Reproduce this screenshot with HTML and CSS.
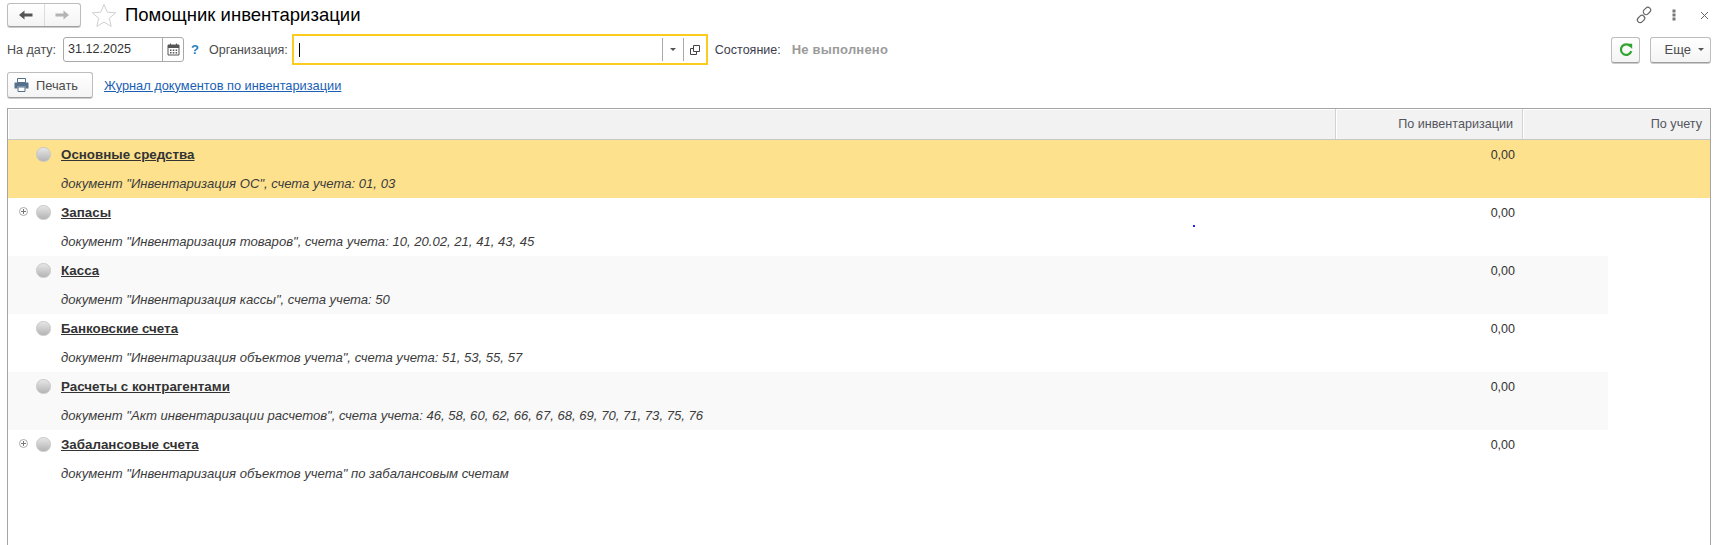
FILE: index.html
```html
<!DOCTYPE html>
<html lang="ru">
<head>
<meta charset="utf-8">
<title>Помощник инвентаризации</title>
<link rel="stylesheet" href="styles.css">
</head>
<body>
<div class="page">
  <header class="titlebar">
    <div class="nav-group">
      <button class="nav-btn"><svg width="16" height="12" viewBox="0 0 16 12"><path d="M1 6l5.500-4.500v3h8v3h-8v3z" fill="#555"/></svg></button>
      <button class="nav-btn"><svg width="16" height="12" viewBox="0 0 16 12"><path d="M15 6L9.500 1.500v3h-8v3h8v3z" fill="#b4b4b4"/></svg></button>
    </div>
    <svg class="star" width="26" height="25" viewBox="0 0 26 25"><path d="M13 1.500l3.300 7.600 8.200.8-6.200 5.400 1.900 8.100L13 19.100l-7.200 4.300 1.900-8.100L1.500 9.900l8.200-.8z" fill="none" stroke="#cfcfcf" stroke-width="1"/></svg>
    <h1 class="title">Помощник инвентаризации</h1>
    <div class="win-icons">
      <svg width="18" height="18" viewBox="0 0 18 18"><g fill="none" stroke="#666" stroke-width="1.200"><rect x="8" y="2.200" width="8" height="5.500" rx="2.700" transform="rotate(-45 12 5)"/><rect x="2" y="10.300" width="8" height="5.500" rx="2.700" transform="rotate(-45 6 13)"/></g></svg>
      <svg class="dots" width="4" height="12" viewBox="0 0 4 12"><g fill="#777"><rect x="0.500" y="0.500" width="3" height="3"/><rect x="0.500" y="4.500" width="3" height="3"/><rect x="0.500" y="8.500" width="3" height="3"/></g></svg>
      <svg width="9" height="9" viewBox="0 0 9 9"><path d="M1 1l7 7M8 1l-7 7" stroke="#666" stroke-width="1" fill="none"/></svg>
    </div>
  </header>

  <div class="filters">
    <span class="label">На дату:</span>
    <div class="date-field">
      <span class="date-value">31.12.2025</span>
      <span class="cal-btn"><svg width="13" height="13" viewBox="0 0 13 13"><path d="M1 2h11v10H1z" fill="none" stroke="#555"/><path d="M1 2h11v3H1z" fill="#555"/><path d="M3 0.500h1v2H3zM9 0.500h1v2H9z" fill="#555"/><path d="M3 6.500h1.500V8H3zM5.800 6.500h1.500V8H5.800zM8.600 6.500h1.500V8H8.600zM3 9h1.500v1.500H3zM5.800 9h1.500v1.500H5.800zM8.600 9h1.500v1.500H8.600z" fill="#555"/></svg></span>
    </div>
    <span class="help">?</span>
    <span class="label org-label">Организация:</span>
    <div class="org-field">
      <span class="caret"></span>
      <span class="org-btn"><i class="arrow"></i></span>
      <span class="org-btn org-open"><svg width="10" height="10" viewBox="0 0 10 10"><path d="M3.500.5h6v6h-6zM.5 3.500h3M.5 3.500v6h6v-3" fill="none" stroke="#444"/></svg></span>
    </div>
    <span class="label state-label">Состояние:</span>
    <span class="state-value">Не выполнено</span>
    <div class="filters-right">
      <button class="btn refresh"><svg width="14" height="14" viewBox="0 0 14 14"><path d="M11.300 3.200A5.300 5.300 0 1 0 12.300 8.200" fill="none" stroke="#2fa52f" stroke-width="2.200"/><path d="M8 .8h5.200v5.200z" fill="#2fa52f"/></svg></button>
      <button class="btn more">Еще<i class="arrow"></i></button>
    </div>
  </div>

  <div class="actions">
    <button class="btn print"><svg width="15" height="14" viewBox="0 0 15 14"><path d="M3.500.5h8v4h-8z" fill="#fff" stroke="#54708a"/><path d="M1 4.500h13a1 1 0 0 1 .5 1v5h-3v-2h-8v2h-3v-5a1 1 0 0 1 .5-1z" fill="#54708a"/><path d="M4 9h7v4.500H4z" fill="#fff" stroke="#54708a"/></svg>Печать</button>
    <a class="journal" href="#">Журнал документов по инвентаризации</a>
  </div>

  <section class="grid">
    <div class="grid-head">
      <div class="head-cell head-main"></div>
      <div class="head-cell head-inv">По инвентаризации</div>
      <div class="head-cell head-acc">По учету</div>
    </div>
    <div class="grid-body">
      <div class="row selected">
        <span class="tree"></span><span class="dot"></span>
        <div class="texts"><a class="name">Основные средства</a><em class="doc">документ "Инвентаризация ОС", счета учета: 01, 03</em></div>
        <div class="val">0,00</div>
      </div>
      <div class="row">
        <span class="tree plus"></span><span class="dot"></span>
        <div class="texts"><a class="name">Запасы</a><em class="doc">документ "Инвентаризация товаров", счета учета: 10, 20.02, 21, 41, 43, 45</em></div>
        <div class="val">0,00</div>
      </div>
      <div class="row stripe">
        <span class="tree"></span><span class="dot"></span>
        <div class="texts"><a class="name">Касса</a><em class="doc">документ "Инвентаризация кассы", счета учета: 50</em></div>
        <div class="val">0,00</div>
      </div>
      <div class="row">
        <span class="tree"></span><span class="dot"></span>
        <div class="texts"><a class="name">Банковские счета</a><em class="doc">документ "Инвентаризация объектов учета", счета учета: 51, 53, 55, 57</em></div>
        <div class="val">0,00</div>
      </div>
      <div class="row stripe">
        <span class="tree"></span><span class="dot"></span>
        <div class="texts"><a class="name">Расчеты с контрагентами</a><em class="doc">документ "Акт инвентаризации расчетов", счета учета: 46, 58, 60, 62, 66, 67, 68, 69, 70, 71, 73, 75, 76</em></div>
        <div class="val">0,00</div>
      </div>
      <div class="row">
        <span class="tree plus"></span><span class="dot"></span>
        <div class="texts"><a class="name">Забалансовые счета</a><em class="doc">документ "Инвентаризация объектов учета" по забалансовым счетам</em></div>
        <div class="val">0,00</div>
      </div>
      <span class="speck"></span>
    </div>
  </section>
</div>
</body>
</html>
```

FILE: styles.css
```css
* { box-sizing: border-box; }
html, body { margin: 0; height: 100%; background: #fff; overflow: hidden; }
body { font-family: "Liberation Sans", Arial, sans-serif; font-size: 12.5px; color: #4b4b4b; }
button { font: inherit; padding: 0; }
.page { display: flex; flex-direction: column; height: 545px; padding: 2px 16px 0 7px; }

.titlebar { display: flex; align-items: center; height: 26px; }
.nav-group { display: flex; width: 74px; height: 24px; border: 1px solid #bdbdbd; border-bottom-color: #9e9e9e; border-radius: 3px; background: linear-gradient(#fff, #f4f4f4); box-shadow: 0 1px 0 #ccc; }
.nav-btn { flex: 1; display: flex; align-items: center; justify-content: center; border: 0; background: none; }
.nav-btn + .nav-btn { border-left: 1px solid #dcdcdc; }
.star { margin-left: 10px; }
.title { margin: 0 0 0 8px; font-size: 18.5px; font-weight: 400; color: #000; }
.win-icons { margin-left: auto; display: flex; align-items: center; margin-right: 2px; }
.win-icons .dots { margin: 0 24px 0 19px; }

.filters { display: flex; align-items: center; height: 31px; margin-top: 6px; }
.label { color: #4b4b4b; }
.date-field { display: flex; flex: none; width: 121px; height: 25px; margin-left: 7px; border: 1px solid #a9a9a9; border-radius: 3px; }
.date-value { flex: 1; padding-left: 4px; line-height: 23px; font-size: 12.6px; color: #333; }
.cal-btn { width: 21px; display: flex; align-items: center; justify-content: center; border-left: 1px solid #a9a9a9; }
.help { margin-left: 7px; font-weight: 700; color: #1f7fc0; font-size: 13px; }
.org-label { margin-left: 10px; }
.org-field { display: flex; align-items: center; flex: none; width: 416px; height: 31px; margin-left: 4px; border: 2px solid #fbcb1e; padding: 2px 0 2px 5px; }
.caret { width: 1px; height: 14px; background: #000; margin-right: auto; }
.org-btn { width: 21px; height: 100%; display: flex; align-items: center; justify-content: center; border-left: 1px solid #a9a9a9; }
.org-open { width: 23px; }
.arrow { display: inline-block; width: 0; height: 0; border: 3px solid transparent; border-top: 3px solid #555; border-bottom: 0; }
.state-label { margin-left: 7px; color: #3c3c4c; }
.state-value { margin-left: 11px; font-weight: 700; font-size: 13px; letter-spacing: .2px; color: #9b9b9b; }
.filters-right { margin-left: auto; display: flex; gap: 10px; }
.btn { display: flex; align-items: center; justify-content: center; height: 26px; border: 1px solid #bdbdbd; border-bottom-color: #9e9e9e; border-radius: 3px; background: linear-gradient(#fff, #f4f4f4); box-shadow: 0 1px 0 #ccc; color: #4b4b4b; }
.refresh { width: 29px; }
.more { width: 61px; font-size: 13px; gap: 7px; justify-content: flex-end; padding-right: 6px; }

.actions { display: flex; align-items: center; height: 26px; margin-top: 7px; }
.print { width: 86px; gap: 7px; justify-content: flex-start; padding-left: 6px; font-size: 12.8px; }
.journal { margin-left: 11px; font-size: 12.8px; color: #1a5fb4; text-decoration: underline; }

.grid { position: relative; flex: 1; display: flex; flex-direction: column; margin-top: 10px; border: 1px solid #a5a5a5; border-bottom: 0; }
.grid-head { display: grid; grid-template-columns: 1fr 187px 188px; flex: none; height: 31px; background: #f2f2f2; border-bottom: 1px solid #c8c8c8; box-shadow: inset 0 1px 0 #fff; font-size: 12.6px; }
.head-cell { display: flex; align-items: center; justify-content: flex-end; padding-right: 8px; color: #555560; border-left: 1px solid #d2d2d2; box-shadow: inset 1px 0 0 #fff; }
.head-inv { padding-right: 9px; }
.head-main { border-left: 0; }

.grid-body { position: relative; flex: 1; }
.row { display: flex; height: 58px; width: 1600px; padding-top: 7px; }
.row.selected { width: auto; background: #fde18d; }
.row.stripe { background: #f9f9f9; }
.tree { position: relative; flex: none; width: 9px; height: 9px; margin: 2px 0 0 11px; }
.tree.plus { border: 1px solid #aaa; border-radius: 50%; background: linear-gradient(#777, #777) center / 5px 1px no-repeat, linear-gradient(#777, #777) center / 1px 5px no-repeat; }
.dot { flex: none; width: 14.500px; height: 14.500px; margin: 0 0 0 8px; border-radius: 50%; background: linear-gradient(#e6e6e6, #b4b4b4); border: 1px solid #c8c8c8; }
.texts { flex: 1; display: flex; flex-direction: column; margin-left: 10.500px; padding-top: 1px; }
.name { font-weight: 700; font-size: 13.35px; line-height: 14px; color: #333; text-decoration: underline; align-self: flex-start; }
.doc { margin-top: 15px; font-size: 13.1px; line-height: 14px; color: #3c3c3c; }
.val { flex: none; margin-top: 1px; margin-right: 93px; text-align: right; line-height: 14px; color: #333; }
.row.selected .val { margin-right: 195px; }
.speck { position: absolute; left: 1185px; top: 85px; width: 2px; height: 2px; background: #2020ff; }
```
